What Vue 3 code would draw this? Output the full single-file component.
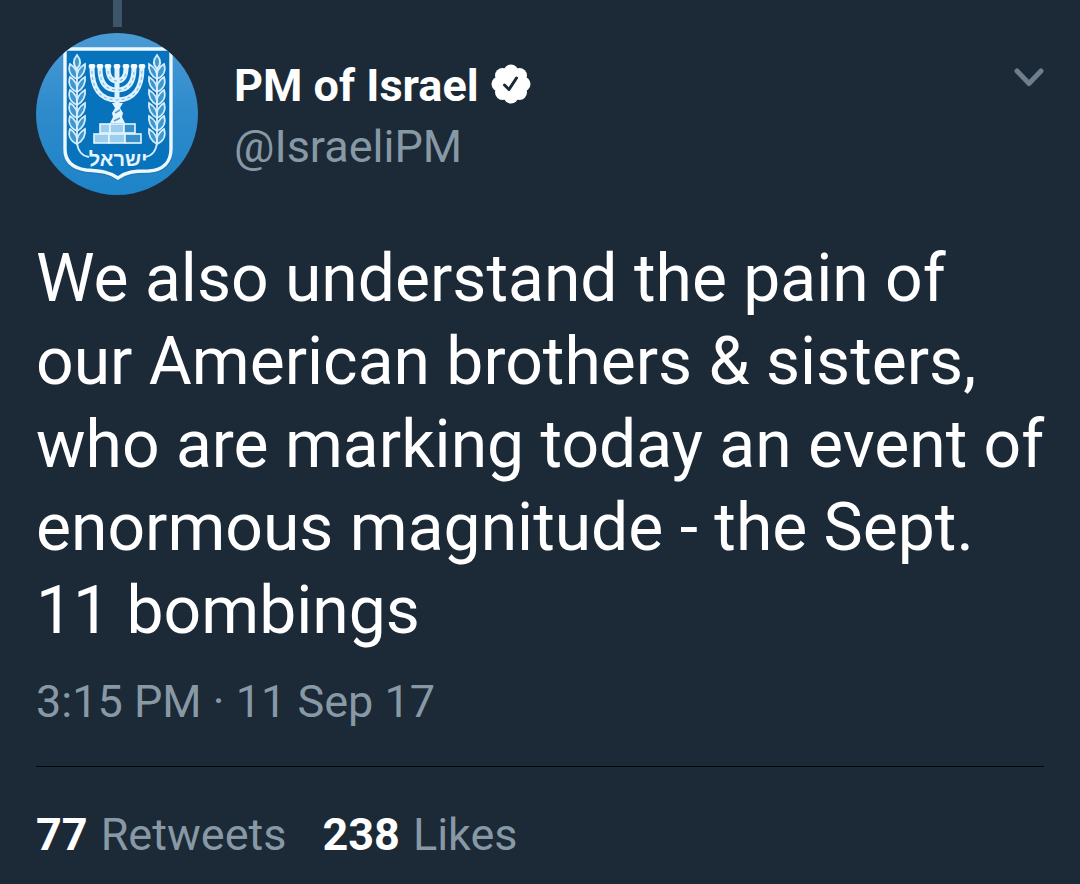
<script setup>
const leafRows = [34, 47, 60, 73, 86, 99]
const cups = [56, 64, 72, 81, 90, 98, 106]
const branches = [
  { id: 'left', transform: 'translate(41 0)' },
  { id: 'right', transform: 'translate(121 0) scale(-1 1)' },
]
const lobes = Array.from({ length: 8 }, (_, i) => {
  const angle = (i * Math.PI) / 4
  return { id: i, x: 20 + 12 * Math.sin(angle), y: 20 - 12 * Math.cos(angle) }
})
const stats = [
  { label: 'Retweets', count: 77 },
  { label: 'Likes', count: 238 },
]
</script>

<template>
  <article class="tweet">
    <div class="thread-line"></div>
    <header class="header">
      <svg class="avatar" viewBox="0 0 162 162" role="img" aria-label="PM of Israel">
        <defs>
          <linearGradient id="sky" x1="0" y1="0" x2="0" y2="1">
            <stop offset="0" stop-color="#4a9bd6" />
            <stop offset="0.5" stop-color="#2e8acb" />
            <stop offset="1" stop-color="#1d84c8" />
          </linearGradient>
          <clipPath id="disc"><circle cx="81" cy="81" r="81" /></clipPath>
        </defs>
        <g clip-path="url(#disc)">
          <rect width="162" height="162" fill="url(#sky)" />
          <path d="M29 18H137V120C137 132 128 140 114 141C98 141 90 142 82 148C73 142 65 141 50 140C36 138 29 132 29 120Z" fill="#1b6fae" opacity="0.5" />
          <path d="M29 16H135V116C135 129 127 137 113 138C97 138 90 139 82 145C73 139 66 138 50 137C36 135 29 128 29 116Z" fill="#0873bd" stroke="#eef8ff" stroke-width="3.4" />

          <g v-for="b in branches" :key="b.id" :transform="b.transform" fill="#3f97d0" stroke="#d5edfb" stroke-width="1.8">
            <path d="M0 22C-4 27-4 32 0 36C4 32 4 27 0 22Z" />
            <g v-for="y in leafRows" :key="y" :transform="`translate(0 ${y - 34})`">
              <path d="M0 46C-7 43-9 37-7 31C-2 34 1 39 0 46Z" />
              <path d="M0 46C-1 39 3 34 8 31C9 37 6 43 0 46Z" />
            </g>
            <path d="M0 34V110C1 118 5 123 12 124" fill="none" />
          </g>

          <g fill="none" stroke="#dff2ff" stroke-width="5">
            <path d="M56 35C56 55 64 67 81 67S106 55 106 35" />
            <path d="M64 35C64 50 70 57 81 57S98 50 98 35" />
            <path d="M72 35C72 43 75 48 81 48S90 43 90 35" />
            <path d="M81 34V72" />
          </g>
          <g fill="none" stroke="#7fc0e8" stroke-width="1.2" stroke-dasharray="3 3">
            <path d="M56 38C56 55 64 67 81 67S106 55 106 38" />
            <path d="M64 38C64 50 70 57 81 57S98 50 98 38" />
            <path d="M72 38C72 43 75 48 81 48S90 43 90 38" />
          </g>
          <g fill="#f2faff">
            <rect v-for="x in cups" :key="x" :x="x - 3.3" y="31" width="6.6" height="4.5" rx="1.8" />
          </g>
          <path d="M76 70H87L84 75L87 80L86 84L89 90H74L77 84L76 80L79 75Z" fill="#e5f5ff" />
          <path d="M79 80L84 77M78 88L84 85" stroke="#4fa0d5" stroke-width="1.5" />

          <g stroke="#e5f5ff" stroke-width="1.6">
            <rect x="64" y="91" width="10" height="9" fill="#9bcdec" />
            <rect x="74" y="91" width="14" height="9" fill="#9bcdec" />
            <rect x="88" y="91" width="11" height="9" fill="#398fc9" />
            <rect x="58" y="101" width="15" height="9" fill="#9bcdec" />
            <rect x="73" y="101" width="16" height="9" fill="#9bcdec" />
            <rect x="89" y="101" width="16" height="9" fill="#398fc9" />
          </g>
          <text class="motto" x="82" y="133" text-anchor="middle">ישראל</text>
        </g>
      </svg>

      <div class="identity">
        <div class="name-row">
          <span class="name">PM of Israel</span>
          <svg class="badge" viewBox="0 0 40 40" role="img" aria-label="Verified account">
            <g fill="#fff">
              <circle cx="20" cy="20" r="15" />
              <circle v-for="l in lobes" :key="l.id" :cx="l.x" :cy="l.y" r="7.5" />
            </g>
            <path d="M13.5 21L18 25.5L25.5 14" fill="none" stroke="#1c2936" stroke-width="3" stroke-linecap="round" stroke-linejoin="round" />
          </svg>
        </div>
        <div class="handle">@IsraeliPM</div>
      </div>

      <button class="menu" type="button" aria-label="More options">
        <svg class="chevron" viewBox="0 0 30 20">
          <path d="M3 3L15 15.5L27 3" fill="none" stroke="#6d7f8e" stroke-width="5" stroke-linecap="round" stroke-linejoin="round" />
        </svg>
      </button>
    </header>

    <p class="body">We also understand the pain of our American brothers &amp; sisters, who are marking today an event of enormous magnitude - the Sept. 11 bombings</p>
    <time class="date" datetime="2017-09-11T15:15">3:15 PM · 11 Sep 17</time>

    <footer class="stats">
      <span v-for="s in stats" :key="s.label" class="stat"><strong class="count">{{ s.count }}</strong><span>{{ s.label }}</span></span>
    </footer>
  </article>
</template>

<style>
html,
body {
  margin: 0;
  background: #1c2936;
}
</style>

<style scoped>
.tweet {
  padding: 0 36px 20px;
  background: #1c2936;
  color: #8899a6;
  font-family: Roboto, "Liberation Sans", sans-serif;
  font-size: 45px;
  line-height: 53px;
}

.thread-line {
  width: 9px;
  height: 27px;
  margin-left: 77px;
  background: #3d5568;
}

.header {
  display: flex;
  align-items: flex-start;
  margin-top: 6px;
}

.avatar {
  flex: none;
  width: 162px;
  height: 162px;
}

.motto {
  fill: #e5f5ff;
  font-family: "Liberation Sans", "DejaVu Sans", sans-serif;
  font-size: 20px;
  font-weight: 700;
}

.identity {
  flex: 1;
  margin: 22px 0 0 36px;
  line-height: 61px;
}

.name-row {
  display: flex;
  align-items: center;
  gap: 12px;
}

.name {
  color: #fff;
  font-weight: 700;
}

.badge {
  width: 40px;
  height: 40px;
  margin-bottom: 4px;
}

.menu {
  display: flex;
  margin: 35px 0 0;
  padding: 0;
  border: 0;
  background: none;
  cursor: pointer;
}

.chevron {
  width: 30px;
  height: 20px;
}

.body {
  margin: 42px -6px 0 0;
  color: #fff;
  font-size: 66px;
  line-height: 83px;
}

.date {
  display: block;
  margin-top: 23px;
  padding-bottom: 38px;
  border-bottom: 1px solid #05080b;
}

.stats {
  display: flex;
  gap: 36px;
  margin-top: 41px;
}

.stat {
  display: flex;
  gap: 13px;
}

.count {
  color: #fff;
  font-weight: 700;
}
</style>
